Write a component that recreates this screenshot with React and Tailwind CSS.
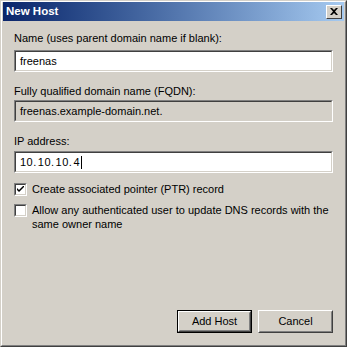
import React from "react";

const FONT = { fontFamily: '"Liberation Sans", Arial, sans-serif' };

const Sunken = ({ children, className = "" }) => (
  <div className="border border-t-[#808080] border-l-[#808080] border-b-white border-r-white">
    <div className={`border border-t-[#404040] border-l-[#404040] border-b-[#d4d0c8] border-r-[#d4d0c8] h-[20px] flex items-center px-[4px] text-[11px] text-black ${className}`}>
      {children}
    </div>
  </div>
);

const Checkbox = ({ checked }) => (
  <div className="w-[13px] h-[13px] shrink-0 border border-t-[#808080] border-l-[#808080] border-b-white border-r-white">
    <div className="w-full h-full bg-white border border-t-[#404040] border-l-[#404040] border-b-[#d4d0c8] border-r-[#d4d0c8] flex items-center justify-center">
      {checked && (
        <svg width="7" height="7" viewBox="0 0 7 7">
          <path d="M0 2 L0 4 L2 6 L7 1 L7 -1 L2 4 Z" fill="#000" />
        </svg>
      )}
    </div>
  </div>
);

const Button = ({ children, isDefault }) => (
  <div className={`w-[75px] h-[23px] ${isDefault ? "border border-black" : ""}`}>
    <div className="w-full h-full border border-t-white border-l-white border-b-[#404040] border-r-[#404040]">
      <div className="w-full h-full border border-t-[#d4d0c8] border-l-[#d4d0c8] border-b-[#808080] border-r-[#808080] flex items-center justify-center text-[11px] text-black">
        {children}
      </div>
    </div>
  </div>
);

export default function App() {
  return (
    <div className="w-[347px] h-[347px] bg-[#d4d0c8]" style={FONT}>
      <div className="w-full h-full border border-t-[#d4d0c8] border-l-[#d4d0c8] border-b-[#404040] border-r-[#404040]">
        <div className="w-full h-full border border-t-white border-l-white border-b-[#808080] border-r-[#808080] flex flex-col">
          {/* Title bar */}
          <div className="h-[19px] mx-[1px] bg-gradient-to-r from-[#0a246a] to-[#a6caf0] flex items-center justify-between pl-[3px] pr-[2px]">
            <span className="text-white font-bold text-[11.5px]">New Host</span>
            <div className="w-[16px] h-[14px] bg-[#d4d0c8] border border-t-white border-l-white border-b-[#404040] border-r-[#404040] flex items-center justify-center">
              <svg width="8" height="7" viewBox="0 0 8 7">
                <path d="M0 0 H2 L4 2 L6 0 H8 L5 3.5 L8 7 H6 L4 5 L2 7 H0 L3 3.5 Z" fill="#000" />
              </svg>
            </div>
          </div>

          {/* Body */}
          <div className="flex-1 flex flex-col px-[12px] text-[11px] leading-[13px] text-black">
            <div className="mt-[11px]">Name (uses parent domain name if blank):</div>
            <div className="mt-[5px]">
              <Sunken className="bg-white">freenas</Sunken>
            </div>

            <div className="mt-[13px]">Fully qualified domain name (FQDN):</div>
            <div className="mt-[2px]">
              <Sunken className="bg-[#d4d0c8]">freenas.example-domain.net.</Sunken>
            </div>

            <div className="mt-[13px]">IP address:</div>
            <div className="mt-[3px]">
              <Sunken className="bg-white">
                <span className="tracking-[0.5px]">10.</span>
                <span className="ml-[1px] tracking-[0.5px]">10.</span>
                <span className="ml-[1px] tracking-[0.5px]">10.</span>
                <span className="ml-[1px]">4</span>
                <span className="w-[1px] h-[13px] bg-black ml-[1px]" />
              </Sunken>
            </div>

            <div className="mt-[10px] flex items-center gap-[5px]">
              <Checkbox checked />
              <span>Create associated pointer (PTR) record</span>
            </div>
            <div className="mt-[8px] flex items-start gap-[5px]">
              <Checkbox />
              <span className="leading-[14px] -mt-[1px]">
                Allow any authenticated user to update DNS records with the
                <br />
                same owner name
              </span>
            </div>

            <div className="mt-auto mb-[12px] flex justify-end gap-[6px]">
              <Button isDefault>Add Host</Button>
              <Button>Cancel</Button>
            </div>
          </div>
        </div>
      </div>
    </div>
  );
}
